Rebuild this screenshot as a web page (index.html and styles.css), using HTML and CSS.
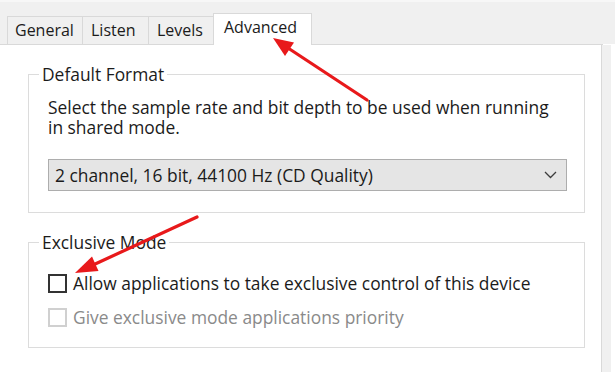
FILE: index.html
```html
<!DOCTYPE html>
<html>
<head>
<meta charset="utf-8">
<link rel="stylesheet" href="styles.css">
</head>
<body>
<div class="window">
  <div class="top">
    <div class="tabs">
      <div class="tab">General</div>
      <div class="tab">Listen</div>
      <div class="tab">Levels</div>
      <div class="tab active">Advanced</div>
    </div>
  </div>
  <div class="main">
    <div class="panel">
      <fieldset class="group">
        <legend>Default Format</legend>
        <p class="desc"><span class="line">Select the sample rate and bit depth to be used when running</span><span class="line">in shared mode.</span></p>
        <div class="select">
          <span>2 channel, 16 bit, 44100 Hz (CD Quality)</span>
          <svg class="chev" width="13" height="8" viewBox="0 0 13 8"><path d="M1 1 L6.5 6.5 L12 1" fill="none" stroke="#3c3c3c" stroke-width="1.3"/></svg>
        </div>
      </fieldset>
      <fieldset class="group group2">
        <legend>Exclusive Mode</legend>
        <div class="check-row">
          <span class="box"></span>
          <span>Allow applications to take exclusive control of this device</span>
        </div>
        <div class="check-row disabled">
          <span class="box"></span>
          <span>Give exclusive mode applications priority</span>
        </div>
      </fieldset>
    </div>
    <div class="gutter"></div>
  </div>
  <svg class="arrows" width="615" height="381" viewBox="0 0 615 381">
    <line x1="367" y1="100" x2="288" y2="48" stroke="#e8191b" stroke-width="3.2" stroke-linecap="round"/>
    <polygon points="273,38 294,42.5 285,56" fill="#e8191b"/>
    <line x1="197" y1="217" x2="93" y2="265" stroke="#e8191b" stroke-width="3.2" stroke-linecap="round"/>
    <polygon points="75,273 98.5,271 92,256.5" fill="#e8191b"/>
  </svg>
</div>
</body>
</html>
```
FILE: styles.css
```css
html, body {
  margin: 0;
  padding: 0;
  background: #ffffff;
}
body {
  font-family: "Open Sans", "Noto Sans", sans-serif;
  font-size: 17.4px;
  color: #1b1b1b;
}
.window {
  position: relative;
  width: 615px;
  height: 381px;
  overflow: hidden;
}
.top {
  background: #f0f0f0;
  border-top: 2px solid #f7f7f7;
  height: 42px;
  display: flex;
  align-items: flex-end;
}
.tabs {
  display: flex;
  align-items: flex-end;
  width: 596px;
  padding-left: 7px;
  border-bottom: 1px solid #d9d9d9;
  height: 31px;
  margin-bottom: -1px;
}
.tab {
  box-sizing: border-box;
  height: 28px;
  padding: 0 7px;
  border: 1px solid #d9d9d9;
  border-bottom: none;
  border-right: none;
  background: #f0f0f0;
  line-height: 27px;
  font-size: 16px;
  white-space: nowrap;
  color: #1b1b1b;
}
.tab:nth-child(1) { width: 75px; padding-left: 7px; }
.tab:nth-child(2) { width: 66px; padding-left: 8px; }
.tab:nth-child(3) { width: 65px; padding-left: 8px; }
.tab.active {
  width: 99px;
  height: 32px;
  margin-bottom: -1px;
  background: #ffffff;
  border-right: 1px solid #d9d9d9;
  padding-left: 10px;
  line-height: 27px;
}
.main {
  display: flex;
  margin-top: 1px;
}
.panel {
  width: 602px;
  height: 327px;
  background: #ffffff;
  border-right: 1px solid #d9d9d9;
  padding: 19px 0 0 28px;
  box-sizing: border-box;
}
.gutter {
  width: 9px;
  height: 327px;
  background: #f0f0f0;
}
.group {
  width: 557px;
  box-sizing: border-box;
  margin: 0;
  border: 1px solid #dcdcdc;
  padding: 13px 16px 21px 19px;
}
.group legend {
  padding: 0 3px;
  margin-left: -9px;
  line-height: 20px;
}
.desc {
  margin: 0;
  white-space: nowrap;
}
.desc .line {
  display: block;
  height: 20px;
  line-height: 20px;
}
.select {
  margin-top: 22px;
  height: 32px;
  box-sizing: border-box;
  width: 519px;
  border: 1px solid #adadad;
  background: #e5e5e5;
  display: flex;
  align-items: center;
  justify-content: space-between;
  padding: 0 9px 0 6px;
}
.group2 {
  margin-top: 19px;
  padding-top: 19px;
  padding-bottom: 18px;
}
.check-row {
  display: flex;
  align-items: center;
  gap: 6px;
  height: 24px;
  white-space: nowrap;
}
.check-row + .check-row {
  margin-top: 10px;
}
.box {
  width: 19px;
  height: 19px;
  box-sizing: border-box;
  border: 2px solid #333333;
  background: #ffffff;
  flex: none;
}
.disabled {
  color: #8a8a8a;
}
.disabled .box {
  border-color: #d0d0d0;
}
.arrows {
  position: absolute;
  left: 0;
  top: 0;
  pointer-events: none;
}
```
